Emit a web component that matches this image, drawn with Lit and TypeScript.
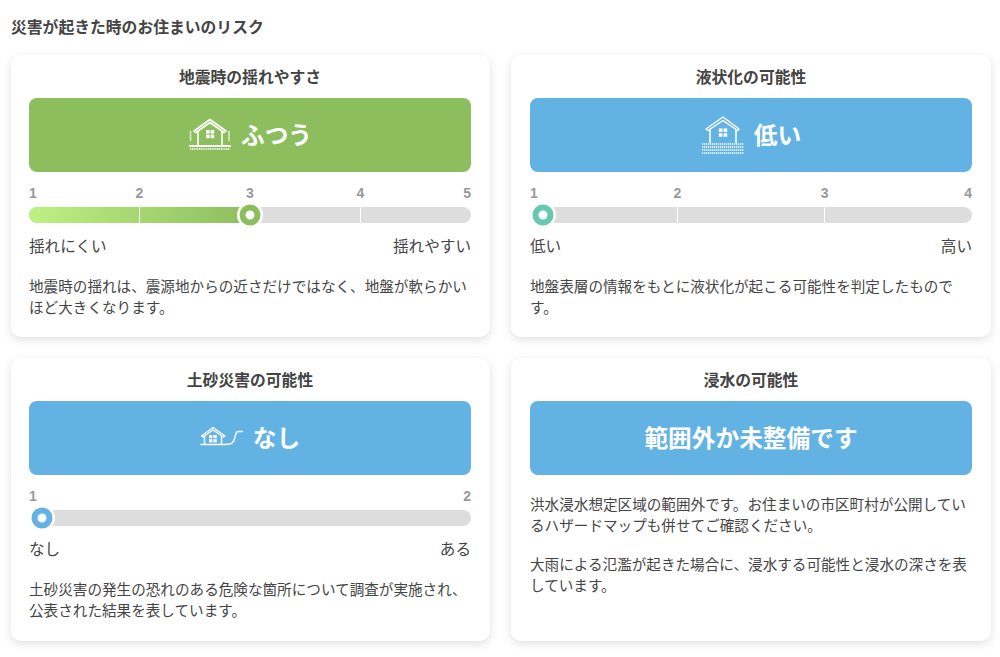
import { LitElement, html, css, svg } from "lit";
import { customElement } from "lit/decorators.js";

const houseQuake = svg`<svg class="icon" width="44" height="36" viewBox="0 0 44 36" fill="none" stroke="#fff">
  <path d="M6 14 L22 2.5 L38 14 L36 15.5 L22 5.5 L8 15.5 Z" stroke-width="1.6" stroke-linejoin="round"/>
  <path d="M10 14 V28 M34 14 V28" stroke-width="1.6"/>
  <rect x="18" y="13" width="3.6" height="3.6" fill="#fff" stroke="none"/><rect x="22.6" y="13" width="3.6" height="3.6" fill="#fff" stroke="none"/>
  <rect x="18" y="17.6" width="3.6" height="3.6" fill="#fff" stroke="none"/><rect x="22.6" y="17.6" width="3.6" height="3.6" fill="#fff" stroke="none"/>
  <path d="M2.5 14 V24 M41 14 V24" stroke-width="1.6" stroke-dasharray="1.4 .7"/>
  <path d="M1 29 H43" stroke-width="1.8"/>
  <path d="M2 32 H42" stroke-width="1.3" stroke-dasharray="1.2 .6"/>
</svg>`;

const houseLiq = svg`<svg class="icon" width="44" height="40" viewBox="0 0 44 40" fill="none" stroke="#fff">
  <path d="M5 14 L22 2 L38 14 L36.5 15.5 L22 5.5 L7 15.5 Z" stroke-width="1.5" stroke-linejoin="round"/>
  <path d="M9 14 V28 M35 14 V28" stroke-width="1.6"/>
  <rect x="17.8" y="13.4" width="3.6" height="3.6" fill="#fff" stroke="none"/><rect x="22.6" y="13.4" width="3.6" height="3.6" fill="#fff" stroke="none"/>
  <rect x="17.8" y="18.2" width="3.6" height="3.6" fill="#fff" stroke="none"/><rect x="22.6" y="18.2" width="3.6" height="3.6" fill="#fff" stroke="none"/>
  <path d="M1 29 H43 M1 32 H43 M1 35 H43 M1 38 H43" stroke-width="1.5" stroke-dasharray="1.3 .7"/>
</svg>`;

const houseSlope = svg`<svg class="icon up" width="44" height="20" viewBox="0 0 44 20" fill="none" stroke="#fff">
  <path d="M1.5 10 L13 1.5 L25 10 L23.5 11 L13 4 L3 11 Z" stroke-width="1.3" stroke-linejoin="round"/>
  <path d="M4.5 10 V18 M21.5 10 V18" stroke-width="1.5"/>
  <rect x="9" y="9" width="3.4" height="3.2" fill="#fff" stroke="none"/><rect x="13.4" y="9" width="3.4" height="3.2" fill="#fff" stroke="none"/>
  <rect x="9" y="13.2" width="3.4" height="3.2" fill="#fff" stroke="none"/><rect x="13.4" y="13.2" width="3.4" height="3.2" fill="#fff" stroke="none"/>
  <path d="M0.5 18.6 H25 C31 18.6 34 17 35 11 C36 6.5 36.5 5.6 38.5 5.6 H43" stroke-width="1.5"/>
</svg>`;

interface Scale {
  count: number;
  value: number;
  colour: string;
  low: string;
  high: string;
}

@customElement("risk-scale")
class RiskScale extends LitElement {
  static properties = { data: { attribute: false } };
  data!: Scale;
  static styles = css`
    :host { display: block; }
    .nums {
      display: grid;
      font: bold 14px "Liberation Sans", Arial, sans-serif;
      color: #999;
      line-height: 16px;
      margin-bottom: 6px;
    }
    .nums span { text-align: center; grid-column: span 2; }
    .nums span.first { text-align: left; grid-column: span 1; }
    .nums span.last { text-align: right; grid-column: span 1; }
    .track {
      position: relative;
      height: 16px;
      border-radius: 8px;
      background: #ddd;
    }
    .fill {
      position: absolute;
      left: 0; top: 0; bottom: 0;
      border-radius: 8px 0 0 8px;
    }
    .tick {
      position: absolute;
      top: 0; bottom: 0;
      width: 1.5px;
      margin-left: -0.75px;
      background: #fff;
    }
    .thumb {
      position: absolute;
      top: 50%;
      width: 21px;
      height: 21px;
      box-sizing: border-box;
      border-radius: 50%;
      background: #fff;
      transform: translate(-50%, -50%);
      box-shadow: 0 0 0 2.5px #fff;
    }
    .ends {
      display: flex;
      justify-content: space-between;
      margin-top: 11px;
      font-size: 15.6px;
      line-height: 22px;
      color: #444;
    }
  `;
  render() {
    const d = this.data;
    const segs = d.count - 1;
    const pct = ((d.value - 1) / segs) * 100;
    const nums = Array.from({ length: d.count }, (_, i) => i + 1);
    const ticks = nums.slice(1, -1).map((n) => ((n - 1) / segs) * 100);
    const thumbLeft = d.value === 1 ? "13px" : `${pct}%`;
    return html`
      <div class="nums" style="grid-template-columns: repeat(${segs * 2}, 1fr)">
        ${nums.map(
          (n, i) => html`<span class="${i === 0 ? "first" : i === segs ? "last" : ""}">${n}</span>`
        )}
      </div>
      <div class="track">
        ${pct > 0
          ? html`<div class="fill" style="width:${pct}%;background:linear-gradient(90deg,#bef084,${d.colour})"></div>`
          : ""}
        ${ticks.map((t) => html`<div class="tick" style="left:${t}%"></div>`)}
        <div class="thumb" style="left:${thumbLeft};border:6.5px solid ${d.colour}"></div>
      </div>
      <div class="ends"><span>${d.low}</span><span>${d.high}</span></div>
    `;
  }
}

@customElement("app-root")
export class AppRoot extends LitElement {
  static styles = css`
    :host {
      display: block;
      font-family: "Noto Sans CJK JP", "Liberation Sans", sans-serif;
      color: #444;
      background: #fff;
      height: 657px;
      overflow: hidden;
      box-sizing: border-box;
      padding: 15px 9px 0 11px;
    }
    h2 {
      margin: 0 0 17px;
      font-size: 15.8px;
      line-height: 23px;
      font-weight: 700;
      color: #444;
    }
    .grid {
      display: grid;
      grid-template-columns: 479px 480px;
      grid-template-rows: 282px 283px;
      column-gap: 21px;
      row-gap: 21.3px;
    }
    .card {
      background: #fff;
      border-radius: 10px;
      box-shadow: 0 3px 10px rgba(0, 0, 0, 0.12);
      padding: 11px 19px 0 19px;
      box-sizing: border-box;
    }
    .card:nth-child(odd) { padding-left: 18px; }
    h3 {
      margin: 0 0 10px;
      text-align: center;
      font-size: 15.8px;
      line-height: 22px;
      font-weight: 700;
      color: #444;
    }
    .banner {
      height: 74px;
      border-radius: 8px;
      display: flex;
      align-items: center;
      justify-content: center;
      gap: 9px;
      color: #fff;
      font-size: 23.7px;
      font-weight: 700;
      margin-bottom: 13px;
    }
    .banner span { padding-bottom: 2px; }
    .banner.plain { margin-bottom: 18px; }
    .icon { flex: none; }
    .icon.up { margin-bottom: 5px; }
    .green { background: #8cbe5e; }
    .blue { background: #62b2e4; }
    p {
      margin: 0;
      font-size: 14.6px;
      line-height: 21px;
      color: #444;
    }
    risk-scale + p { margin-top: 19px; }
    p + p { margin-top: 18px; }
  `;

  render() {
    return html`
      <h2>災害が起きた時のお住まいのリスク</h2>
      <div class="grid">
        <section class="card">
          <h3>地震時の揺れやすさ</h3>
          <div class="banner green">${houseQuake}<span>ふつう</span></div>
          <risk-scale .data=${{ count: 5, value: 3, colour: "#8cbe5e", low: "揺れにくい", high: "揺れやすい" }}></risk-scale>
          <p>地震時の揺れは、震源地からの近さだけではなく、地盤が軟らかいほど大きくなります。</p>
        </section>
        <section class="card">
          <h3>液状化の可能性</h3>
          <div class="banner blue">${houseLiq}<span>低い</span></div>
          <risk-scale .data=${{ count: 4, value: 1, colour: "#66c8b0", low: "低い", high: "高い" }}></risk-scale>
          <p>地盤表層の情報をもとに液状化が起こる可能性を判定したものです。</p>
        </section>
        <section class="card">
          <h3>土砂災害の可能性</h3>
          <div class="banner blue">${houseSlope}<span>なし</span></div>
          <risk-scale .data=${{ count: 2, value: 1, colour: "#62b2e4", low: "なし", high: "ある" }}></risk-scale>
          <p>土砂災害の発生の恐れのある危険な箇所について調査が実施され、公表された結果を表しています。</p>
        </section>
        <section class="card">
          <h3>浸水の可能性</h3>
          <div class="banner blue plain"><span>範囲外か未整備です</span></div>
          <p>洪水浸水想定区域の範囲外です。お住まいの市区町村が公開しているハザードマップも併せてご確認ください。</p>
          <p>大雨による氾濫が起きた場合に、浸水する可能性と浸水の深さを表しています。</p>
        </section>
      </div>
    `;
  }
}
